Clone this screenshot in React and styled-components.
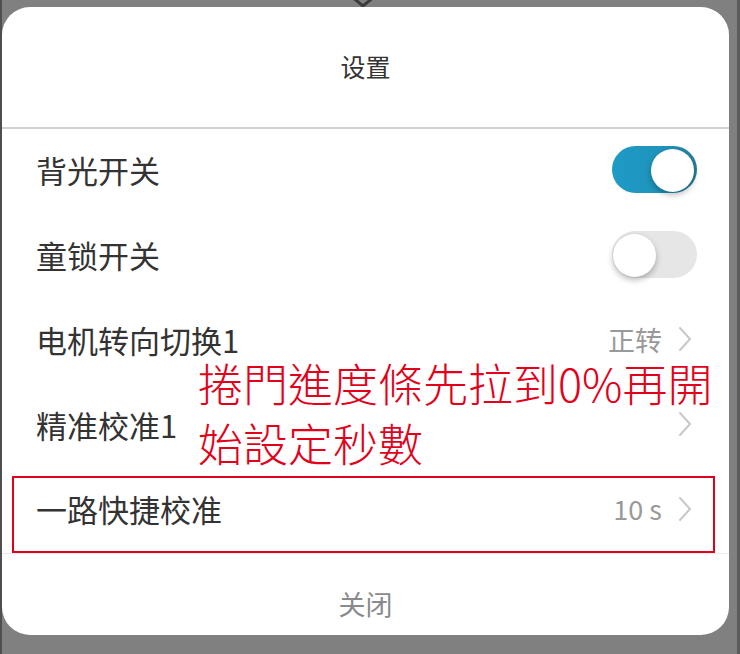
import React from 'react';
import styled, { createGlobalStyle } from 'styled-components';

const GlobalStyle = createGlobalStyle`
  html, body {
    margin: 0;
    padding: 0;
    background: #808080;
  }
  * {
    box-sizing: border-box;
  }
`;

const Page = styled.div`
  width: 740px;
  height: 654px;
  background: #808080;
  border-left: 2px solid #4f4f4f;
  border-right: 3px solid #5c5c5c;
  padding-right: 8px;
  display: flex;
  flex-direction: column;
  font-family: "Noto Sans CJK SC", "Noto Sans", sans-serif;
`;

const TopStrip = styled.div`
  height: 7px;
  display: flex;
  justify-content: center;
  overflow: hidden;
  padding-right: 6px;
`;

const Card = styled.div`
  position: relative;
  width: 727px;
  height: 628px;
  background: #fff;
  border-radius: 28px;
  overflow: hidden;
  display: flex;
  flex-direction: column;
`;

const Header = styled.div`
  height: 122px;
  display: flex;
  align-items: center;
  justify-content: center;
  border-bottom: 2px solid #d2d2d2;
  font-size: 25px;
  color: #333;
  padding-bottom: 2px;
`;

const List = styled.div`
  display: flex;
  flex-direction: column;
`;

const Row = styled.div`
  height: 85px;
  display: flex;
  align-items: center;
  justify-content: space-between;
  padding: 0 32px 5px 34px;
  border-bottom: ${(p) => (p.$last ? '1px solid #ececec' : 'none')};
`;

const Label = styled.span`
  font-size: 31px;
  color: #333;
`;

const Right = styled.div`
  display: flex;
  align-items: center;
  gap: 16px;
  padding-right: 5px;
`;

const Value = styled.span`
  font-size: 27px;
  color: #999;
`;

const Track = styled.div`
  position: relative;
  width: 85px;
  height: 47px;
  border-radius: 24px;
  background: ${(p) => (p.$on ? 'linear-gradient(90deg, #1d9bc6 0%, #1f93bb 60%, #277f9c 100%)' : '#e6e6e6')};
  flex-shrink: 0;
`;

const Knob = styled.div`
  position: absolute;
  top: 3px;
  left: ${(p) => (p.$on ? '39px' : '1px')};
  width: 43px;
  height: 43px;
  border-radius: 50%;
  background: #fff;
  box-shadow: 0 3px 6px rgba(0, 0, 0, 0.28);
`;

const Footer = styled.div`
  flex: 1;
  display: flex;
  justify-content: center;
  padding-top: 35px;
  font-size: 27px;
  line-height: 30px;
  color: #8a8a8a;
`;

const Note = styled.div`
  position: absolute;
  left: 196px;
  top: 346px;
  font-family: "Noto Sans CJK TC", "Noto Sans", sans-serif;
  font-size: 45px;
  font-weight: 300;
  line-height: 60px;
  color: #e3001b;
  white-space: nowrap;
`;

const NoteLine = styled.span`
  display: block;
`;

const Frame = styled.div`
  position: absolute;
  left: 10px;
  top: 469px;
  width: 703px;
  height: 77px;
  border: 2px solid #e0001b;
`;

function Toggle({ on }) {
  return (
    <Track $on={on}>
      <Knob $on={on} />
    </Track>
  );
}

function Chevron() {
  return (
    <svg width="14" height="26" viewBox="0 0 14 26" fill="none">
      <path d="M2 2 L12 13 L2 24" stroke="#c8c8c8" strokeWidth="2" strokeLinecap="round" strokeLinejoin="round" />
    </svg>
  );
}

const rows = [
  { label: '背光开关', toggle: true, on: true },
  { label: '童锁开关', toggle: true, on: false },
  { label: '电机转向切换1', value: '正转' },
  { label: '精准校准1', value: '' },
  { label: '一路快捷校准', value: '10 s' },
];

export default function App() {
  return (
    <>
      <GlobalStyle />
      <Page>
        <TopStrip>
          <svg width="40" height="7" viewBox="0 0 40 7">
            <path d="M8 -4 L20 6 L32 -4" stroke="#3c3c3c" strokeWidth="3" fill="none" />
          </svg>
        </TopStrip>
        <Card>
          <Header>设置</Header>
          <List>
            {rows.map((r, i) => (
              <Row key={r.label} $last={i === rows.length - 1}>
                <Label>{r.label}</Label>
                {r.toggle ? (
                  <Toggle on={r.on} />
                ) : (
                  <Right>
                    {r.value && <Value>{r.value}</Value>}
                    <Chevron />
                  </Right>
                )}
              </Row>
            ))}
          </List>
          <Footer>关闭</Footer>
          <Note>
            <NoteLine>捲門進度條先拉到0%再開</NoteLine>
            <NoteLine>始設定秒數</NoteLine>
          </Note>
          <Frame />
        </Card>
      </Page>
    </>
  );
}
